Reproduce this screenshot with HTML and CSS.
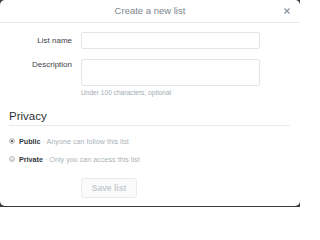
FILE: index.html
```html
<!DOCTYPE html>
<html>
<head>
<meta charset="utf-8">
<link rel="stylesheet" href="styles.css">
</head>
<body>
<div class="modal">
  <div class="header">
    <span></span>
    <span class="title">Create a new list</span>
    <span class="close"><svg width="6" height="6" viewBox="0 0 6 6"><path d="M0.5 0.5L5.5 5.5M5.5 0.5L0.5 5.5" stroke="#8a96a0" stroke-width="1.3" fill="none"/></svg></span>
  </div>
  <div class="form">
    <label class="lbl">List name</label>
    <div class="field"><div class="input"></div></div>
    <label class="lbl lbl-top">Description</label>
    <div class="field">
      <div class="textarea"></div>
      <div class="hint">Under 100 characters, optional</div>
    </div>
  </div>
  <div class="privacy">
    <h2 class="ptitle">Privacy</h2>
    <div class="options">
      <div class="opt"><span class="radio checked"></span><b>Public</b><span class="desc">&nbsp;· Anyone can follow this list</span></div>
      <div class="opt"><span class="radio"></span><b>Private</b><span class="desc">&nbsp;· Only you can access this list</span></div>
    </div>
    <div class="actions"><button class="save">Save list</button></div>
  </div>
</div>
</body>
</html>
```
FILE: styles.css
```css
html { margin: 0; padding: 0; background: #fff; }
body {
  margin: 0;
  padding: 0;
  background: #3c3c3c;
  width: 300px;
  height: 207px;
  overflow: hidden;
  font-family: "Liberation Sans", Arial, sans-serif;
}
.modal {
  width: 300px;
  height: 206px;
  background: #fff;
  border-radius: 5px;
  overflow: hidden;
}
.header {
  height: 22px;
  border-bottom: 1px solid #e6eaec;
  display: grid;
  grid-template-columns: 1fr auto 1fr;
  align-items: center;
}
.title {
  font-size: 9.5px;
  color: #7d858b;
  line-height: 22px;
}
.close {
  justify-self: end;
  margin-right: 10px;
  display: flex;
  margin-top: -1px;
}
.form {
  padding-top: 9px;
  display: grid;
  grid-template-columns: 72px 179px;
  column-gap: 9px;
  row-gap: 10px;
}
.lbl {
  font-size: 8px;
  color: #3f4448;
  text-align: right;
  line-height: 17px;
}
.lbl-top { line-height: 11px; }
.input {
  height: 17px;
  box-sizing: border-box;
  border: 1px solid #e1e6e9;
  border-radius: 2px;
}
.textarea {
  height: 27px;
  box-sizing: border-box;
  border: 1px solid #e1e6e9;
  border-radius: 2px;
}
.hint {
  margin-top: 3px;
  font-size: 6.6px;
  line-height: 8px;
  color: #a4adb3;
}
.privacy { padding: 0 10px 0 9px; }
.ptitle {
  margin: 12px 0 0;
  font-size: 11.5px;
  font-weight: normal;
  color: #2d3135;
  line-height: 14px;
  padding-bottom: 2px;
  border-bottom: 1px solid #e6eaec;
}
.options {
  margin-top: 9px;
  display: flex;
  flex-direction: column;
  gap: 6px;
}
.opt {
  display: flex;
  align-items: center;
  height: 12px;
  font-size: 7.2px;
  color: #33383c;
}
.opt b { font-weight: bold; }
.desc { color: #aab3b9; }
.radio {
  width: 6px;
  height: 6px;
  box-sizing: border-box;
  border: 1px solid #b9bec2;
  border-radius: 50%;
  background: linear-gradient(#f4f4f4, #d6d6d6);
  margin-right: 4px;
  display: flex;
  align-items: center;
  justify-content: center;
}
.radio.checked::after {
  content: "";
  width: 2px;
  height: 2px;
  border-radius: 50%;
  background: #444;
}
.actions { margin-top: 12px; padding-left: 72px; }
.save {
  width: 56px;
  height: 20px;
  border: 1px solid #e8ecee;
  border-radius: 3px;
  background: #fbfbfc;
  color: #c6cbcf;
  font-family: "Liberation Sans", Arial, sans-serif;
  font-weight: bold;
  font-size: 8.5px;
  padding: 0;
}
```
